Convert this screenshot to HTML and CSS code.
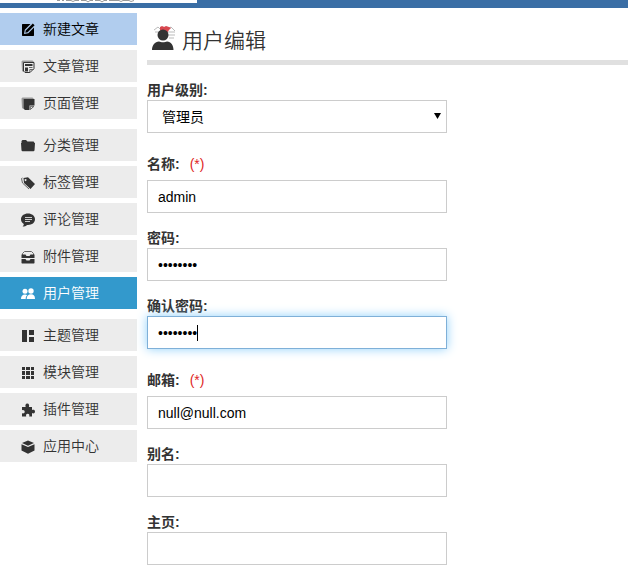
FILE: index.html
```html
<!DOCTYPE html>
<html lang="zh-CN">
<head>
<meta charset="utf-8">
<meta name="viewport" content="width=device-width, initial-scale=1">
<title>用户编辑</title>
<link rel="stylesheet" href="styles.css">
</head>
<body>
<header class="topbar">
  <div class="brand">
    <svg class="brand-mark" viewBox="0 0 80 3" aria-hidden="true"><path d="M1 .5h3M6 .5h2M10 .5h5l2 1 2-1h4M25 .5h5l2 1.500 2-1.500h3M39 .5h5l2 1.500 2-1.500h3M53 .5h10l2 1 2-1h6l2 1 3-1"/></svg>
  </div>
</header>
<div class="layout">
  <nav class="sidebar">
    <ul class="menu">
      <li><a class="item item-new" href="#"><svg class="icon" viewBox="0 0 14 14"><path d="M1.500 1h8L3.800 6.700 3 11l4.300-.8L13 4.500V12.500l-.5.5h-11l-.5-.5v-11z"/><path d="M11.800.5l1.800 1.800-7 7-2.300.5.5-2.300z"/></svg>新建文章</a></li>
      <li><a class="item" href="#"><svg class="icon" viewBox="0 0 14 14"><path class="shade" d="M.5 1.500L1.500.5h10l1.500 1.500H2.500v10L1 11z"/><path class="line" d="M2.500 2.500h10.500v6L9 12.500H4L2.500 11z"/><path d="M4 4h7.500v2H4zM4 7.500h3v4H4z"/><path class="thin" d="M8 7.500h3.500M8.800 12.500V9.500H13"/></svg>文章管理</a></li>
      <li><a class="item" href="#"><svg class="icon" viewBox="0 0 14 14"><path class="shade" d="M.5 1.500L1.500.5h10l1.500 1.500H2.500v10L1 11z"/><path d="M2.500 2h11v6.500H8.500V13H4l-1.500-1.500z"/><path class="thin" d="M9.300 12.500V9.300h3.700z"/></svg>页面管理</a></li>
    </ul>
    <ul class="menu">
      <li><a class="item" href="#"><svg class="icon" viewBox="0 0 14 14"><path d="M.5 2l1-1h3.500l1.500 1.500h6l.8.8V4h.7l-.5 7.500-.8.800H1.300l-.8-.8L0 4h.5z"/></svg>分类管理</a></li>
      <li><a class="item" href="#"><svg class="icon" viewBox="0 0 14 14"><path fill-rule="evenodd" d="M2.500 2L7 1.300l7 6.700L9.500 13 3 7zM4.500 3a1 1 0 1 0 .1 0z"/><path class="thin" d="M1.500 2L.5 2.500l1 4.500L8 13"/></svg>标签管理</a></li>
      <li><a class="item" href="#"><svg class="icon" viewBox="0 0 14 14"><path d="M7 .5c4 0 7 2.300 7 5.800S11 12 7 12l-1-.1C5 13 3.500 13.500 1.500 13.500c1-.7 1.200-1.500 1.300-2.500C1 10 0 8.500 0 6.300 0 2.800 3 .5 7 .5z"/><path class="cut" d="M4 4.500h7M4 6.500h7M4 8.500h5"/></svg>评论管理</a></li>
      <li><a class="item" href="#"><svg class="icon" viewBox="0 0 14 14"><path class="thin" d="M1.500 5V3.500l2-2h7l2 2V5"/><path d="M.5 4.500h4l1 1.500h3l1-1.500h4V8H.5zM.5 9h4l1 1.500h3l1-1.500h4v4l-.5.5H1l-.5-.5z"/></svg>附件管理</a></li>
      <li><a class="item item-current" href="#" aria-current="page"><svg class="icon" viewBox="0 0 14 14"><circle cx="4" cy="4.300" r="2.500"/><circle cx="10" cy="4" r="2.700"/><path d="M0 12c0-3 1.500-4.500 4-4.500 1 0 1.700.3 2.200.8C5 9.200 4.700 10.500 4.700 12z"/><path d="M5.700 12c0-3.200 1.600-4.700 4.300-4.700s4 1.500 4 4.700z"/></svg>用户管理</a></li>
    </ul>
    <ul class="menu">
      <li><a class="item" href="#"><svg class="icon" viewBox="0 0 14 14"><path d="M1 1h5v12H1zM8 1h5v5H8zM8 8h5v5H8z"/></svg>主题管理</a></li>
      <li><a class="item" href="#"><svg class="icon" viewBox="0 0 14 14"><path d="M1 1h3v3H1zM5 1h4v3H5zM10 1h3v3h-3zM1 5h3v4H1zM5 5h4v4H5zM10 5h3v4h-3zM1 10h3v3H1zM5 10h4v3H5zM10 10h3v3h-3z"/></svg>模块管理</a></li>
      <li><a class="item" href="#"><svg class="icon" viewBox="0 0 14 14"><path d="M1 4h3.700C4 2.500 4.500.5 6.300.5S8.500 2.500 7.900 4H11v3c1.500-.7 3-.2 3 1.500s-1.500 2.300-3 1.600V13.500H8.200c.5-1.600 0-2.700-1.500-2.700s-2 1.100-1.500 2.700H1V10.300c1.600.4 2.700-.2 2.700-1.500S2.600 6.700 1 7.300z"/></svg>插件管理</a></li>
      <li><a class="item" href="#"><svg class="icon" viewBox="0 0 14 14"><path d="M7 .5L13 3 7 5.700 1 3z"/><path d="M.5 4.200L7 7l6.500-2.800V10.500L7 13.700.5 10.500z"/></svg>应用中心</a></li>
    </ul>
  </nav>
  <main class="content">
    <h1 class="title">
      <svg class="title-icon" viewBox="0 0 32 32" aria-hidden="true">
        <path class="faint" d="M7 5l4-3 2 2 3-2 4 2 4-2 4 4M8 7h20M21 10h7M22 13h5"/>
        <path class="petal" d="M13 2l2-1 2 1 2-1 3 1 2 1-2 2-2 3h-5l-2-3z"/>
        <circle cx="16" cy="10" r="5.500"/>
        <path d="M5 25c0-5 3-8 7-8.500 2 1 6 1 8 0 4 .5 6.500 3.500 6.500 8.500z"/>
      </svg>
      用户编辑
    </h1>
    <form class="form">
      <div class="field">
        <label for="level">用户级别:</label>
        <div class="control">
          <select class="box" id="level"><option>管理员</option></select>
          <svg class="arrow" viewBox="0 0 8 7" aria-hidden="true"><path d="M0 0h7L3.500 6z"/></svg>
        </div>
      </div>
      <div class="field field-required">
        <label for="name">名称:<span class="star">(*)</span></label>
        <input class="box" id="name" type="text" value="admin">
      </div>
      <div class="field">
        <label for="password">密码:</label>
        <input class="box" id="password" type="password" value="password">
      </div>
      <div class="field">
        <label for="confirm">确认密码:</label>
        <div class="control">
          <input class="box box-active" id="confirm" type="password" value="password">
          <span class="caret"></span>
        </div>
      </div>
      <div class="field field-required">
        <label for="email">邮箱:<span class="star">(*)</span></label>
        <input class="box" id="email" type="email" value="null@null.com">
      </div>
      <div class="field">
        <label for="alias">别名:</label>
        <input class="box" id="alias" type="text">
      </div>
      <div class="field">
        <label for="homepage">主页:</label>
        <input class="box" id="homepage" type="text">
      </div>
    </form>
  </main>
</div>
</body>
</html>
```

FILE: styles.css
```css
* { box-sizing: border-box; }
body {
  margin: 0;
  background: #fff;
  color: #333;
  font: 14px/20px "Liberation Sans", "Noto Sans CJK SC", sans-serif;
}
.topbar {
  height: 8px;
  background: #3a6ea5;
}
.brand {
  width: 197px;
  height: 3px;
  padding-left: 56px;
  background: #fff;
}
.brand-mark {
  display: block;
  width: 80px;
  height: 3px;
  fill: none;
  stroke: #999;
}
.layout {
  display: flex;
  gap: 10px;
  padding-top: 5px;
}
.sidebar {
  flex: 0 0 137px;
  display: flex;
  flex-direction: column;
  gap: 10px;
}
.menu {
  display: flex;
  flex-direction: column;
  gap: 5px;
  margin: 0;
  padding: 0;
  list-style: none;
}
.item {
  display: flex;
  align-items: center;
  gap: 8px;
  height: 32px;
  padding-left: 21px;
  background: #ececec;
  color: #333;
  font-weight: 350;
  text-decoration: none;
}
.item-new { background: #b1cdee; color: #000; }
.item-current { background: #3399cc; color: #fff; }
.icon {
  width: 14px;
  height: 14px;
  margin-top: 2px;
  fill: currentColor;
}
.icon .shade { fill: #999; }
.icon .line,
.icon .thin { fill: none; stroke: currentColor; }
.icon .thin { stroke: #666; }
.icon .cut { fill: none; stroke: #ccc; }
.content { flex: 1; min-width: 0; }
.title {
  display: flex;
  align-items: center;
  gap: 3px;
  height: 52px;
  margin: 0 0 15px;
  padding-top: 8px;
  border-bottom: 5px solid #e0e0e0;
  font-size: 21px;
  font-weight: 350;
}
.title-icon { width: 32px; height: 32px; fill: #333; }
.title-icon .petal { fill: #d8474f; }
.title-icon .faint { fill: none; stroke: #bbb; }
.form {
  display: flex;
  flex-direction: column;
  gap: 15px;
  max-width: 300px;
}
.field label { display: block; font-weight: 500; }
.field-required label { line-height: 32px; }
.star { margin-left: 10px; color: #e01f26; font-weight: 400; }
.control { position: relative; }
.box {
  display: block;
  width: 100%;
  height: 33px;
  padding: 0 10px;
  border: 1px solid #ccc;
  border-radius: 0;
  background: #fff;
  color: #000;
  font: inherit;
  outline: 0;
}
.field label { font-weight: 700; }
.field .star { font-weight: 400; }
select.box { appearance: none; padding-left: 14px; }
.box-active,
.box:focus {
  border-color: #7fb0d8;
  box-shadow: 0 0 10px #8fd0fa;
}
.arrow {
  position: absolute;
  top: 13px;
  right: 5px;
  width: 8px;
  height: 7px;
  pointer-events: none;
}
.caret {
  position: absolute;
  top: 9px;
  left: 50px;
  width: 1px;
  height: 16px;
  background: #000;
}
```
